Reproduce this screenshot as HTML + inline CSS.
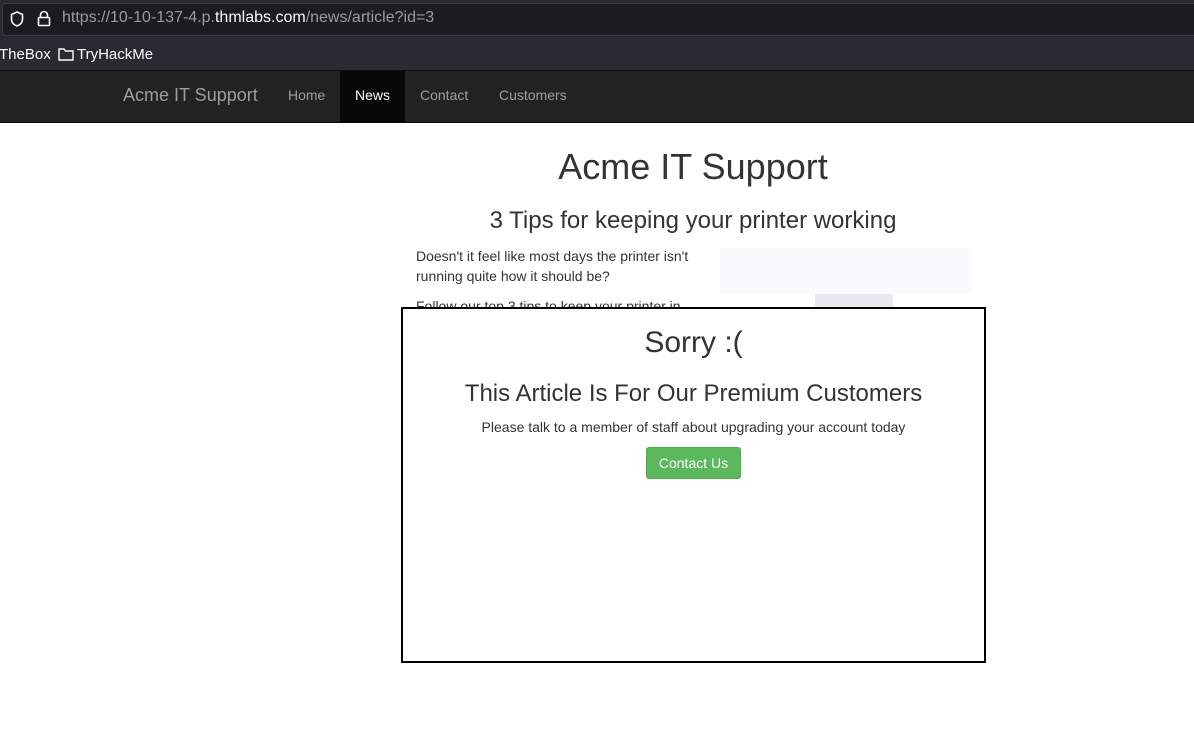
<!DOCTYPE html>
<html><head><style>
body{margin:0;width:1194px;height:738px;background:#fff;font-family:"Liberation Sans",sans-serif;position:relative;overflow:hidden;color:#333}
.url{position:absolute;left:0;top:0;width:1194px;height:38px;background:#2b2a33}
.urlbox{position:absolute;left:2px;top:3px;width:1200px;height:31px;background:#1c1b22;border:1px solid #3a3944;border-radius:4px}
.urltext{position:absolute;left:62px;top:9px;font-size:16px;color:#9a9aa3;font-family:"Liberation Sans",sans-serif}
.urltext b{color:#fbfbfe;font-weight:normal}
.bm{position:absolute;left:0;top:38px;width:1194px;height:32px;background:#2b2a33;color:#fbfbfe;font-size:15px;font-family:"Liberation Sans",sans-serif}
.nav{position:absolute;left:0;top:70px;width:1194px;height:51px;background:#222;border-top:1px solid #111;border-bottom:1px solid #080808}
.nav span{position:absolute;top:16px;font-size:14px;color:#9d9d9d}
.abs{position:absolute}
</style></head><body>
<div class="url"><div class="urlbox"></div>
<svg class="abs" style="left:10px;top:11px" width="14" height="16" viewBox="0 0 14 16"><path d="M7 1L1.5 3.5V8c0 3.5 2.5 6 5.5 7 3-1 5.5-3.5 5.5-7V3.5z" fill="none" stroke="#fbfbfe" stroke-width="1.6"/></svg>
<svg class="abs" style="left:37px;top:10px" width="14" height="17" viewBox="0 0 14 17"><path d="M3.5 7V5a3.5 3.5 0 0 1 7 0v2" fill="none" stroke="#fbfbfe" stroke-width="1.6"/><rect x="1.5" y="7.5" width="11" height="8" rx="1" fill="none" stroke="#fbfbfe" stroke-width="1.6"/></svg>
<div class="urltext">https://10-10-137-4.p.<b>thmlabs.com</b>/news/article?id=3</div></div>
<div class="bm"><span class="abs" style="left:-1px;top:8px">TheBox</span>
<svg class="abs" style="left:58px;top:9px" width="16" height="14" viewBox="0 0 16 14"><path d="M1 2h5l1.5 2H15v9H1z" fill="none" stroke="#fbfbfe" stroke-width="1.4"/></svg>
<span class="abs" style="left:77px;top:8px">TryHackMe</span></div>
<div class="nav">
<span style="left:123px;top:14px;font-size:18px">Acme IT Support</span>
<span style="left:288px">Home</span>
<div class="abs" style="left:340px;top:0;width:65px;height:51px;background:#080808"></div>
<span style="left:355px;color:#fff">News</span>
<span style="left:420px">Contact</span>
<span style="left:499px">Customers</span></div>
<div class="abs" style="left:0;width:1386px;top:146px;text-align:center;font-size:36px">Acme IT Support</div>
<div class="abs" style="left:0;width:1386px;top:207px;text-align:center;font-size:24px">3 Tips for keeping your printer working</div>
<div class="abs" style="left:416px;top:246px;width:290px;font-size:14px;line-height:20px">Doesn't it feel like most days the printer isn't running quite how it should be?<div style="margin-top:10px">Follow our top 3 tips to keep your printer in</div></div>
<div class="abs" style="left:720px;top:248px;width:252px;height:46px;background:#fbfbfd"></div>
<div class="abs" style="left:815px;top:294px;width:78px;height:14px;background:#e8e8ee"></div>
<div class="abs" style="left:401px;top:307px;width:581px;height:352px;border:2px solid #000;background:#fff;text-align:center">
<div style="font-size:30px;margin-top:17px">Sorry :(</div>
<div style="font-size:24px;margin-top:20px">This Article Is For Our Premium Customers</div>
<div style="font-size:14px;margin-top:11px">Please talk to a member of staff about upgrading your account today</div>
<div style="display:inline-block;margin-top:12px;background:#5cb85c;border:1px solid #4cae4c;color:#fff;font-size:14px;padding:7px 12px;border-radius:3px">Contact Us</div>
</div>
</body></html>
